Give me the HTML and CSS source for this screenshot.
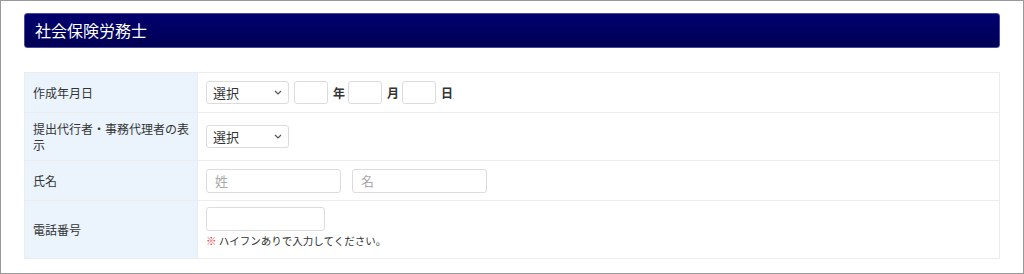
FILE: index.html
```html
<!DOCTYPE html>
<html lang="ja">
<head>
    <meta charset="UTF-8">
    <meta name="viewport" content="width=device-width, initial-scale=1.0">
    <title>社会保険労務士</title>
    <link rel="stylesheet" href="styles.css">
</head>
<body>
    <div class="frame">
        <h2 class="section-title">社会保険労務士</h2>
        <table class="form-table">
            <colgroup>
                <col class="label-col">
                <col>
            </colgroup>
            <tr class="row-date">
                <th>作成年月日</th>
                <td>
                    <select class="sel"><option>選択</option></select><input type="text" class="num first"><span class="unit">年</span><input type="text" class="num"><span class="unit">月</span><input type="text" class="num"><span class="unit">日</span>
                </td>
            </tr>
            <tr class="row-agent">
                <th>提出代行者・事務代理者の表示</th>
                <td><select class="sel"><option>選択</option></select></td>
            </tr>
            <tr class="row-name">
                <th>氏名</th>
                <td>
                    <input type="text" class="name" placeholder="姓">
                    <input type="text" class="name" placeholder="名">
                </td>
            </tr>
            <tr class="row-tel">
                <th>電話番号</th>
                <td>
                    <input type="text" class="tel">
                    <p class="note"><span class="mark">※</span> ハイフンありで入力してください。</p>
                </td>
            </tr>
        </table>
    </div>
</body>
</html>
```

FILE: styles.css
```css
html, body {
    margin: 0;
    padding: 0;
}
body {
    font-family: "Noto Sans CJK JP", "Noto Sans", sans-serif;
    color: #333;
    background: #fff;
}
.frame {
    box-sizing: border-box;
    width: 1024px;
    height: 274px;
    border: 1px solid #9a9a9a;
    padding: 12px 23px 0 23px;
}
.section-title {
    margin: 0;
    height: 35px;
    box-sizing: border-box;
    padding: 0 10px;
    border: 1px solid #4a4a9a;
    border-radius: 3px;
    background: linear-gradient(#00006e, #000054);
    color: #fff;
    font-size: 16px;
    font-weight: normal;
    line-height: 33px;
}
.form-table {
    margin-top: 24px;
    width: 976px;
    table-layout: fixed;
    border-collapse: collapse;
    border: 1px solid #ececec;
    font-size: 12px;
}
.label-col {
    width: 173px;
}
.form-table th,
.form-table td {
    border: 1px solid #ececec;
    vertical-align: middle;
}
.form-table th {
    background: #ebf4fd;
    font-weight: normal;
    text-align: left;
    padding: 0 5px 0 8px;
    line-height: 16px;
}
.form-table td {
    padding: 0 8px;
    font-size: 13px;
}
.row-date { height: 40px; }
.row-agent { height: 48px; }
.row-name { height: 40px; }
.row-tel { height: 58px; }
.row-tel td {
    padding-bottom: 4px;
}
input, select {
    font-family: inherit;
    font-size: 13px;
    color: #333;
    box-sizing: border-box;
    border: 1px solid #dcdcdc;
    border-radius: 3px;
    background-color: #fff;
    margin: 0;
    vertical-align: middle;
    outline: none;
}
.sel {
    appearance: none;
    -webkit-appearance: none;
    width: 83px;
    height: 23px;
    padding: 0 18px 0 6px;
    background-image: url("data:image/svg+xml;utf8,<svg xmlns='http://www.w3.org/2000/svg' width='8' height='5' viewBox='0 0 8 5'><path d='M1 1l3 3 3-3' fill='none' stroke='%23555' stroke-width='1.2'/></svg>");
    background-repeat: no-repeat;
    background-position: right 6px center;
}
.num {
    width: 34px;
    height: 23px;
}
.num.first {
    margin-left: 5px;
}
.unit {
    display: inline-block;
    vertical-align: middle;
    margin: 0 3px 0 5px;
    font-weight: bold;
    font-size: 12px;
}
.name {
    width: 135px;
    height: 24px;
    padding: 0 8px;
    margin-right: 8px;
}
.name::placeholder {
    color: #aaa;
}
.tel {
    width: 119px;
    height: 24px;
    display: block;
}
.note {
    margin: 3px 0 0 0;
    font-size: 10.5px;
    line-height: 14px;
}
.mark {
    color: #e8262a;
    font-weight: bold;
}
```
